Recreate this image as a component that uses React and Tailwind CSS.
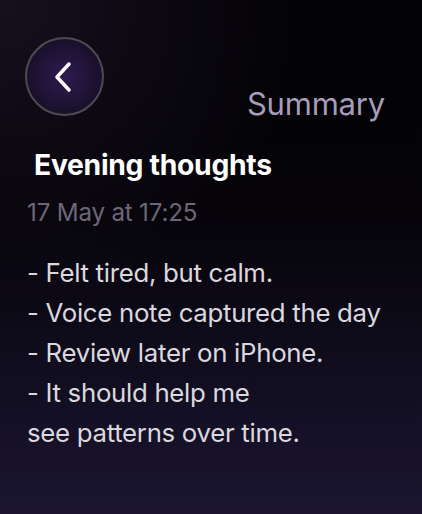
import React from "react";

const lines = [
  "- Felt tired, but calm.",
  "- Voice note captured the day",
  "- Review later on iPhone.",
  "- It should help me",
  "see patterns over time.",
];

export default function App() {
  return (
    <div
      className="w-[422px] h-[514px] overflow-hidden bg-[radial-gradient(circle_at_0%_0%,#16101f_0%,transparent_45%),linear-gradient(to_bottom,#030205_0%,#050308_40%,#120e21_75%,#1b1530_100%)] font-['Inter','Noto_Sans',sans-serif]"
    >
      <div className="flex items-start justify-between pl-[25px] pr-[37px] pt-[37px]">
        <button className="w-[79px] h-[79px] rounded-full border-2 border-[#4d4b50] bg-[radial-gradient(circle,#2e1a50_0%,#1c1230_60%,#120c1c_100%)] flex items-center justify-center">
          <svg width="20" height="32" viewBox="0 0 20 32" className="-ml-[1px]">
            <path d="M15 3 L3 16 L15 29" fill="none" stroke="white" strokeWidth="3.5" strokeLinecap="round" strokeLinejoin="round" />
          </svg>
        </button>
        <span className="mt-[49px] text-[31px] leading-[36px] text-[#a59db9] tracking-[-0.2px]">Summary</span>
      </div>

      <h1 className="mt-[26px] pl-[34px] text-[28.3px] leading-[34px] font-bold text-white tracking-[-0.3px]">
        Evening thoughts
      </h1>

      <div className="mt-[17px] pl-[27px] text-[24.2px] leading-[28px] text-[#6c6678] tracking-[-0.2px]">
        17 May at 17:25
      </div>

      <div className="mt-[26px] pl-[27px] text-[25.8px] leading-[40px] text-[#dad8de] tracking-[-0.3px]">
        {lines.map((l) => (
          <div key={l}>{l}</div>
        ))}
      </div>
    </div>
  );
}
